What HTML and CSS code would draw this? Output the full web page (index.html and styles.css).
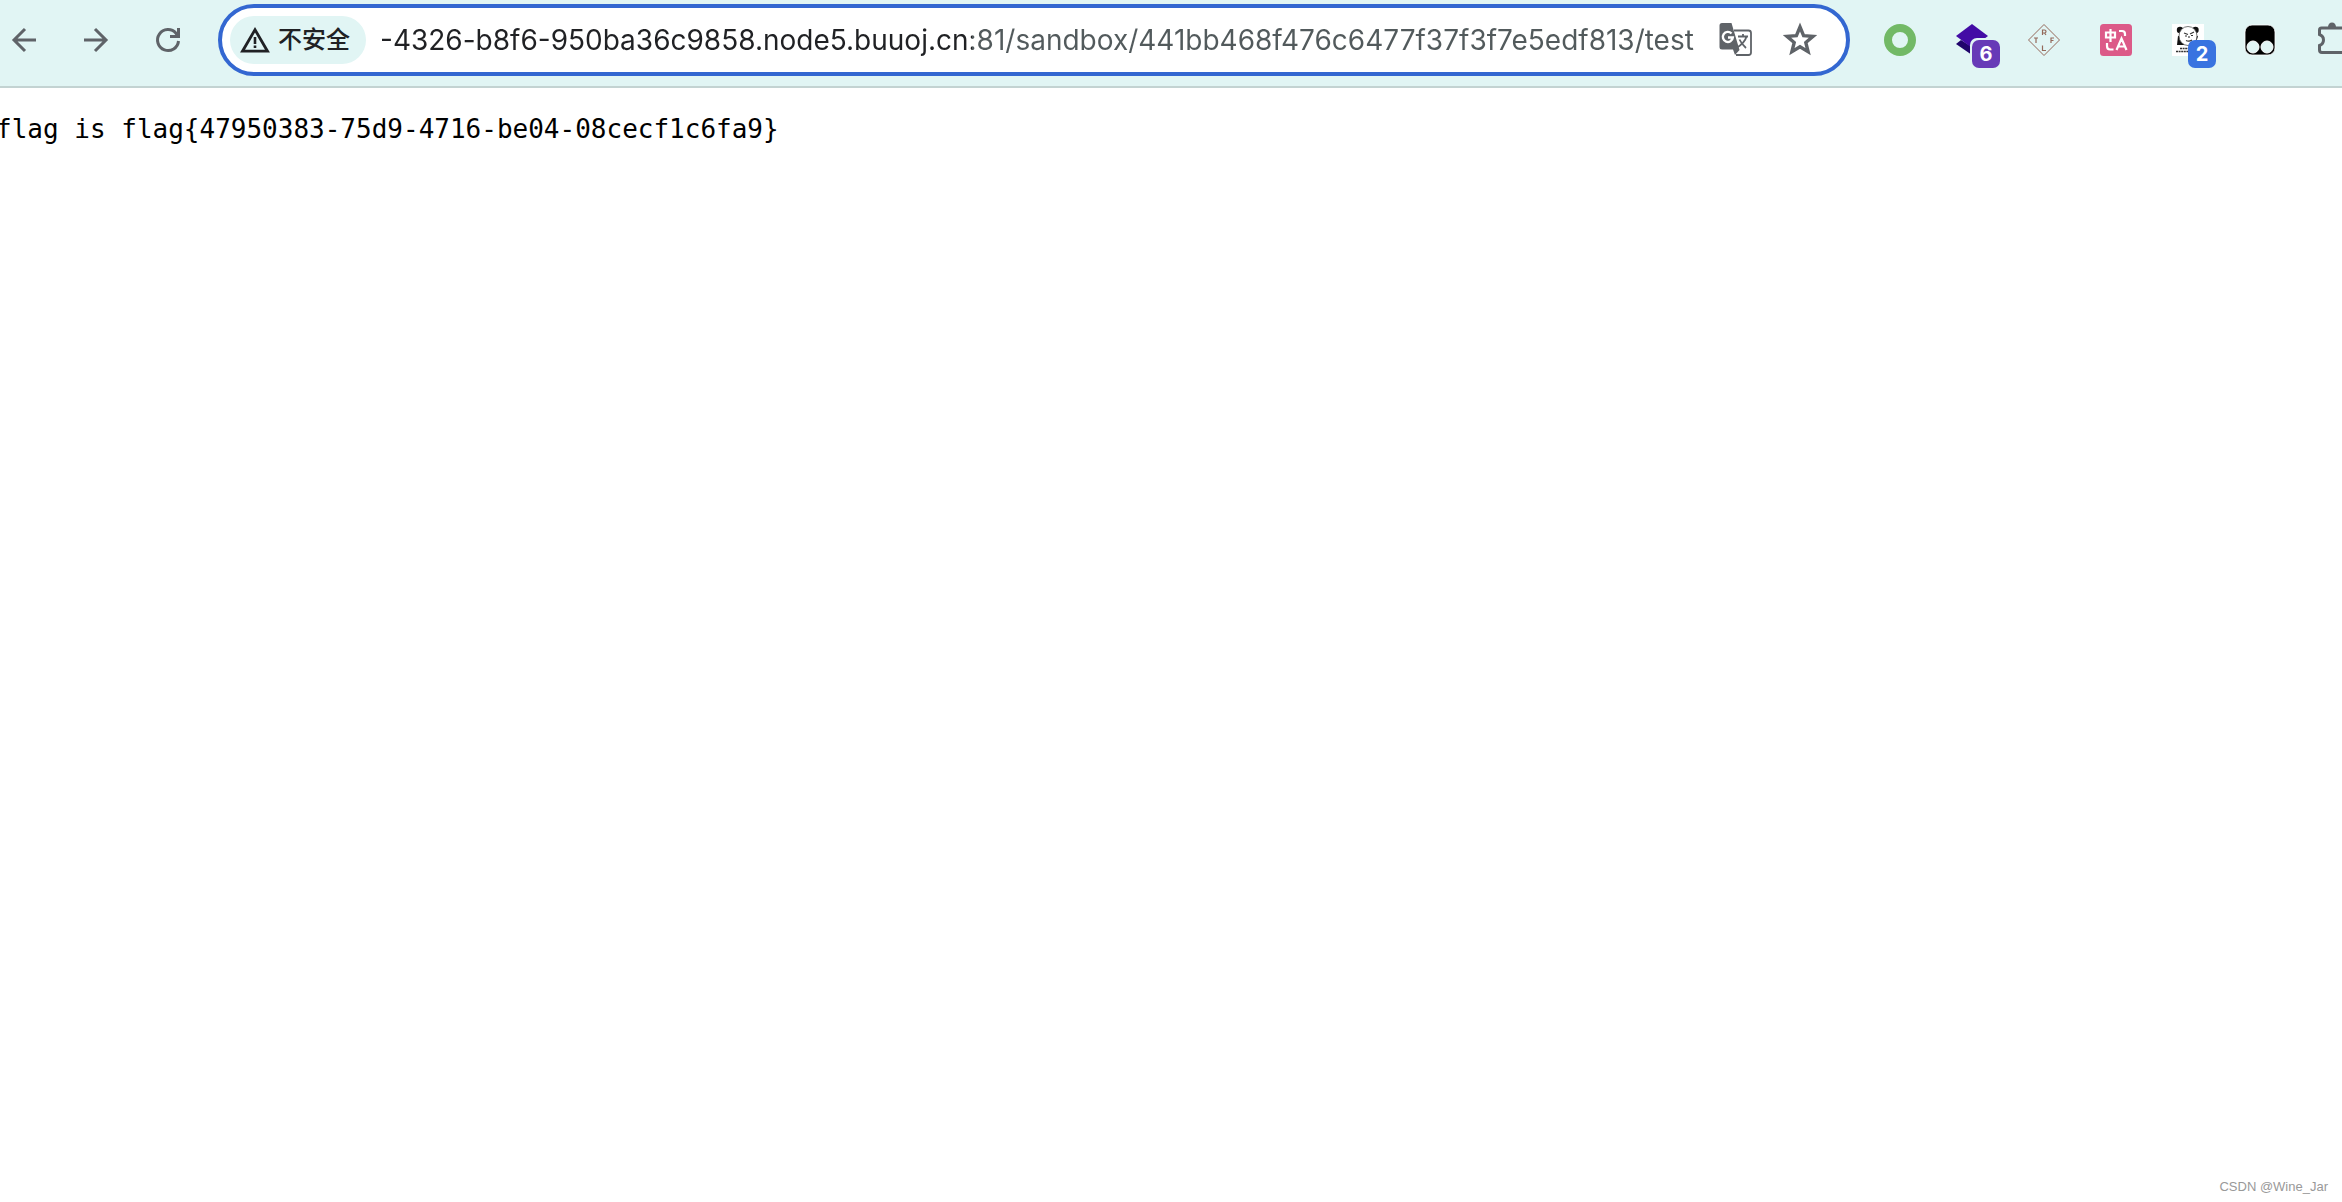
FILE: index.html
```
<!DOCTYPE html>
<html lang="zh-CN">
    <head>
        <meta charset="UTF-8">
        <title>test</title>
        <link rel="stylesheet" href="styles.css">
    </head>
    <body>
        <header class="toolbar">
            <nav class="nav">
                <button type="button" class="tool" aria-label="Back">
                    <svg class="icon-nav" viewBox="0 0 24 24"><path d="M24 12H2M13 1L2 12L13 23"/></svg>
                </button>
                <button type="button" class="tool" aria-label="Forward">
                    <svg class="icon-nav" viewBox="0 0 24 24"><path d="M0 12H22M11 1L22 12L11 23"/></svg>
                </button>
                <button type="button" class="tool" aria-label="Reload">
                    <svg class="icon-nav" viewBox="0 0 24 24"><path d="M22.500 13A10.500 10.500 0 1 1 20 5.200L21 7M22.500 0V8.500H14"/></svg>
                </button>
            </nav>
            <form class="omnibox" onsubmit="return false;">
                <button type="button" class="chip">
                    <svg class="icon-warning" viewBox="0 0 30 26">
                        <path d="M15 2.800L27.500 24.200H2.500Z" fill="none" stroke="#202124" stroke-width="2.800"/>
                        <path d="M13.700 10h2.600v7h-2.600zM13.700 18.500h2.600v2.500h-2.600z" fill="#202124"/>
                    </svg>
                    <span>不安全</span>
                </button>
                <input type="text" class="url" aria-label="Address" spellcheck="false" value="-4326-b8f6-950ba36c9858.node5.buuoj.cn:81/sandbox/441bb468f476c6477f37f3f7e5edf813/test">
                <button type="button" class="action" aria-label="Translate">
                    <svg class="icon-action" viewBox="0 0 34 34">
                        <path d="M15 7.500H29.500Q32 7.500 32 10V29.500Q32 32 29.500 32H17" fill="#fff" stroke="#5f6368" stroke-width="1.800"/>
                        <path d="M19 13.500H29M24 11V13.500M27.500 13.500Q26 19.500 17.500 25M20.500 16.500Q22.500 21 27 25" fill="none" stroke="#5f6368" stroke-width="1.800"/>
                        <path d="M3 0H12.500L20.500 27L16 32L14 26.500H3Q.5 26.500 .5 24V2.500Q.5 0 3 0Z" fill="#5f6368"/>
                        <path d="M12.500 10.500A5 5 0 1 0 13.800 14.500H9" fill="none" stroke="#fff" stroke-width="2.400"/>
                    </svg>
                </button>
                <button type="button" class="action" aria-label="Bookmark">
                    <svg class="icon-action" viewBox="0 0 34 34">
                        <path d="M17 4L20.600 12.700L30 13.400L22.800 19.500L25.100 28.700L17 23.800L8.900 28.700L11.200 19.500L4 13.400L13.400 12.700Z" fill="none" stroke="#5f6368" stroke-width="3.400"/>
                    </svg>
                </button>
            </form>
            <div class="extensions">
                <button type="button" class="tool" aria-label="Proxy">
                    <svg class="icon-ext" viewBox="0 0 32 32"><circle cx="16" cy="16" r="12" fill="none" stroke="#72b966" stroke-width="8"/></svg>
                </button>
                <button type="button" class="tool" aria-label="Layers">
                    <svg class="icon-ext" viewBox="0 0 32 32">
                        <path d="M0 20L5 16L16 23L27 16L32 20L16 31Z" fill="#20046b"/>
                        <path d="M16 0L32 12L16 24L0 12Z" fill="#430ca5"/>
                    </svg>
                    <span class="badge badge-purple">6</span>
                </button>
                <button type="button" class="tool" aria-label="RTFL">
                    <svg class="icon-ext" viewBox="0 0 32 32">
                        <path d="M16 .5L31.500 16L16 31.500L.5 16Z" fill="none" stroke="#94695a"/>
                        <path d="M14.500 11V6H16.500Q18 6 18 7.500T16.500 9H14.500M16.500 9L18 11M6 14H10M8 14V19M23 19V14H26M23 16.500H25.500M14.500 21.500V26.500H18" fill="none" stroke="#94695a" stroke-width="1.200"/>
                    </svg>
                </button>
                <button type="button" class="tool" aria-label="Translator">
                    <svg class="icon-ext" viewBox="0 0 32 32">
                        <rect width="32" height="32" rx="3.500" fill="#dc5a88"/>
                        <path d="M6 8.500H15V13.500H6ZM10.500 5V18M19 7H22Q25 7 25 10V12M7 19V22Q7 25.500 10 25.500H13.500M16.500 26L21.500 14.500L26.500 26M18 22.500H25" fill="none" stroke="#fff" stroke-width="2.200"/>
                    </svg>
                </button>
                <button type="button" class="tool" aria-label="Panda">
                    <svg class="icon-ext" viewBox="0 0 32 32">
                        <rect width="32" height="32" fill="#fff"/>
                        <circle cx="8" cy="6" r="3.200" fill="#111"/>
                        <circle cx="23.500" cy="6" r="3.200" fill="#111"/>
                        <path d="M6 12L5 21H12L24 19L26 12Z" fill="#111"/>
                        <ellipse cx="16" cy="12" rx="9" ry="9.500" fill="#fff" stroke="#555" stroke-width=".8"/>
                        <path d="M12 9L16 10.500M18 10L22 8M13 12H15M19 11.500H21M17 12V14M14 16.500Q17 18 20 16" fill="none" stroke="#333" stroke-width="1.100"/>
                        <path d="M8 24.500H16M4 27.500H18" stroke="#333" stroke-width="1.600" stroke-dasharray="2 .6"/>
                    </svg>
                    <span class="badge badge-blue">2</span>
                </button>
                <button type="button" class="tool" aria-label="Scripts">
                    <svg class="icon-ext" viewBox="0 0 32 32">
                        <rect x="1" y="1" width="30" height="30" rx="7" fill="#000" stroke="#fff" stroke-width=".8"/>
                        <circle cx="9" cy="23" r="6" fill="#e1f5f4" stroke="#fff"/>
                        <circle cx="23" cy="23" r="6" fill="#e1f5f4" stroke="#fff"/>
                    </svg>
                </button>
                <button type="button" class="tool" aria-label="Extensions">
                    <svg class="icon-ext" viewBox="0 0 32 32">
                        <path d="M12 3A4 4.500 0 0 1 20 3Z" fill="#5f6368"/>
                        <path d="M28 4H5.500Q3.500 4 3.500 6V10.500Q7.500 12 7.500 16T3.500 21.500V26Q3.500 28.500 6 28.500H28V20Q32 20 32 16T28 12Z" fill="none" stroke="#5f6368" stroke-width="3"/>
                    </svg>
                </button>
            </div>
        </header>
        <main class="content">
            <pre class="output">flag is flag{47950383-75d9-4716-be04-08cecf1c6fa9}</pre>
        </main>
        <footer class="watermark">CSDN @Wine_Jar</footer>
    </body>
</html>
```
FILE: styles.css
```
* {
    box-sizing: border-box;
}
body {
    display: flex;
    flex-direction: column;
    min-height: 100vh;
    margin: 0;
    background-color: #fff;
    font-family: Inter, "Noto Sans CJK SC", sans-serif;
    overflow-x: hidden;
}
button {
    padding: 0;
    border: none;
    background: none;
    font-family: inherit;
    cursor: pointer;
}
svg {
    display: block;
    overflow: visible;
}
.toolbar {
    display: flex;
    gap: 14px;
    padding: 4px 0 10px;
    background-color: #e1f5f4;
    border-bottom: 2px solid #c3d3d2;
    overflow: hidden;
}
/* the end buttons run past the window edges */
.nav {
    display: flex;
    margin-left: -12px;
}
.extensions {
    display: flex;
    margin-right: -26px;
}
.tool {
    position: relative;
    display: flex;
    flex: none;
    align-items: center;
    justify-content: center;
    width: 72px;
    height: 72px;
}
.icon-nav {
    width: 24px;
    height: 24px;
    fill: none;
    stroke: #5f6368;
    stroke-width: 3;
}
.icon-ext {
    width: 32px;
    height: 32px;
}
.omnibox {
    display: flex;
    flex: 1;
    align-items: center;
    min-width: 0;
    height: 72px;
    padding: 0 14px 0 8px;
    background-color: #fff;
    border: 4px solid #3367d1;
    border-radius: 36px;
}
.chip {
    display: flex;
    flex: none;
    align-items: center;
    gap: 8px;
    height: 48px;
    padding: 0 16px 0 10px;
    background-color: #e1f5f4;
    border-radius: 24px;
    color: #202124;
    font-size: 24px;
    font-weight: 500;
    line-height: 48px;
}
.icon-warning {
    width: 30px;
    height: 26px;
}
/* host is dark, port and path are grey */
.url {
    flex: 1;
    min-width: 0;
    height: 48px;
    margin-left: 14px;
    padding: 0;
    border: none;
    outline: none;
    background: linear-gradient(to right, #202124 592px, #525a5c 592px);
    -webkit-background-clip: text;
    background-clip: text;
    color: transparent;
    font-family: Inter, sans-serif;
    font-size: 28px;
}
.action {
    display: flex;
    flex: none;
    align-items: center;
    justify-content: center;
    width: 64px;
    height: 64px;
}
.icon-action {
    width: 34px;
    height: 34px;
}
.badge {
    position: absolute;
    right: 8px;
    bottom: 8px;
    width: 28px;
    height: 28px;
    border-radius: 7px;
    color: #fff;
    font-size: 20px;
    font-weight: 700;
    line-height: 28px;
    text-align: center;
}
.badge-purple {
    background-color: #673ab7;
    box-shadow: -2px -2px 0 #e1f5f4;
}
.badge-blue {
    background-color: #3973e0;
}
.content {
    flex: 1;
    padding-top: 25px;
}
.output {
    margin: 0 0 0 -4px;
    color: #000;
    font-family: "DejaVu Sans Mono", monospace;
    font-size: 26px;
    line-height: 32px;
}
.watermark {
    padding: 0 14px 5px;
    color: #999;
    font-family: "Liberation Sans", sans-serif;
    font-size: 13px;
    line-height: 20px;
    text-align: right;
}
```
